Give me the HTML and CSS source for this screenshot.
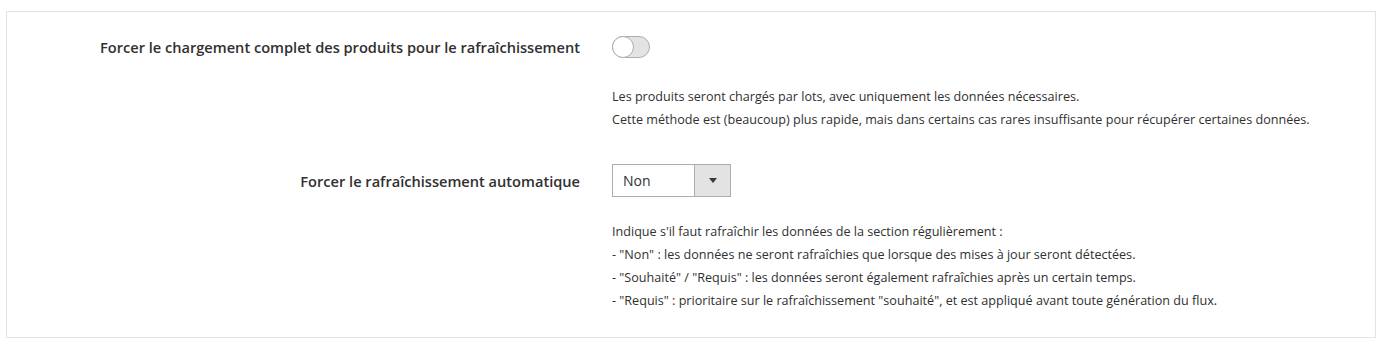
FILE: index.html
```html
<!DOCTYPE html>
<html lang="fr">
<head>
  <meta charset="UTF-8">
  <meta name="viewport" content="width=device-width, initial-scale=1.0">
  <title>Rafraîchissement</title>
  <link rel="stylesheet" href="styles.css">
</head>
<body>

  <div class="panel">
    <div class="field field-toggle">
      <label class="field-label" for="full-load">Forcer le chargement complet des produits pour le rafraîchissement</label>
      <div class="field-control">
        <label class="toggle">
          <input type="checkbox" id="full-load">
          <span class="toggle-track"><span class="toggle-knob"></span></span>
        </label>
      </div>
      <div class="field-note note-toggle">
        <p>Les produits seront chargés par lots, avec uniquement les données nécessaires.</p>
        <p>Cette méthode est (beaucoup) plus rapide, mais dans certains cas rares insuffisante pour récupérer certaines données.</p>
      </div>
    </div>

    <div class="field field-select">
      <label class="field-label" for="auto-refresh">Forcer le rafraîchissement automatique</label>
      <div class="field-control">
        <div class="select">
          <span class="select-value" id="auto-refresh">Non</span>
          <span class="select-arrow"></span>
        </div>
      </div>
      <div class="field-note note-select">
        <p>Indique s'il faut rafraîchir les données de la section régulièrement :</p>
        <p>- "Non" : les données ne seront rafraîchies que lorsque des mises à jour seront détectées.</p>
        <p>- "Souhaité" / "Requis" : les données seront également rafraîchies après un certain temps.</p>
        <p>- "Requis" : prioritaire sur le rafraîchissement "souhaité", et est appliqué avant toute génération du flux.</p>
      </div>
    </div>
  </div>

</body>
</html>
```

FILE: styles.css
```css
body {
  margin: 0;
  background: #fff;
  font-family: "Open Sans", Arial, sans-serif;
  color: #303030;
}
.panel {
  margin: 11px 13px 0 6px;
  border: 1px solid #e3e3e3;
  padding: 24px 0 25px;
}
.field {
  display: grid;
  grid-template-columns: 573px 1fr;
  column-gap: 32px;
}
.field-label {
  text-align: right;
  font-size: 14.6px;
  font-weight: 600;
  color: #303030;
  align-self: center;
}
.field-control {
  display: flex;
  align-items: center;
}
.field-note {
  grid-column: 2;
  font-size: 12.6px;
  line-height: 23px;
  color: #303030;
}
.field-note p {
  margin: 0;
}
.note-toggle {
  margin-top: 27px;
}
.field-select {
  margin-top: 33px;
}
.note-select {
  margin-top: 23px;
}
.toggle input {
  display: none;
}
.toggle-track {
  display: block;
  width: 36px;
  height: 20px;
  border: 1px solid #adadad;
  border-radius: 11px;
  background: #e3e3e3;
  position: relative;
}
.toggle-knob {
  position: absolute;
  left: -1px;
  top: -1px;
  width: 20px;
  height: 20px;
  border: 1px solid #adadad;
  border-radius: 50%;
  background: #fff;
}
.select {
  display: flex;
  width: 117px;
  height: 31px;
  border: 1px solid #adadad;
  background: #fff;
}
.select-value {
  flex: 1;
  padding-left: 10px;
  font-size: 14px;
  line-height: 31px;
  color: #303030;
}
.select-arrow {
  width: 35px;
  border-left: 1px solid #adadad;
  background: #e3e3e3;
  display: flex;
  align-items: center;
  justify-content: center;
}
.select-arrow::after {
  content: "";
  border-left: 4px solid transparent;
  border-right: 4px solid transparent;
  border-top: 5px solid #41362f;
}
```
